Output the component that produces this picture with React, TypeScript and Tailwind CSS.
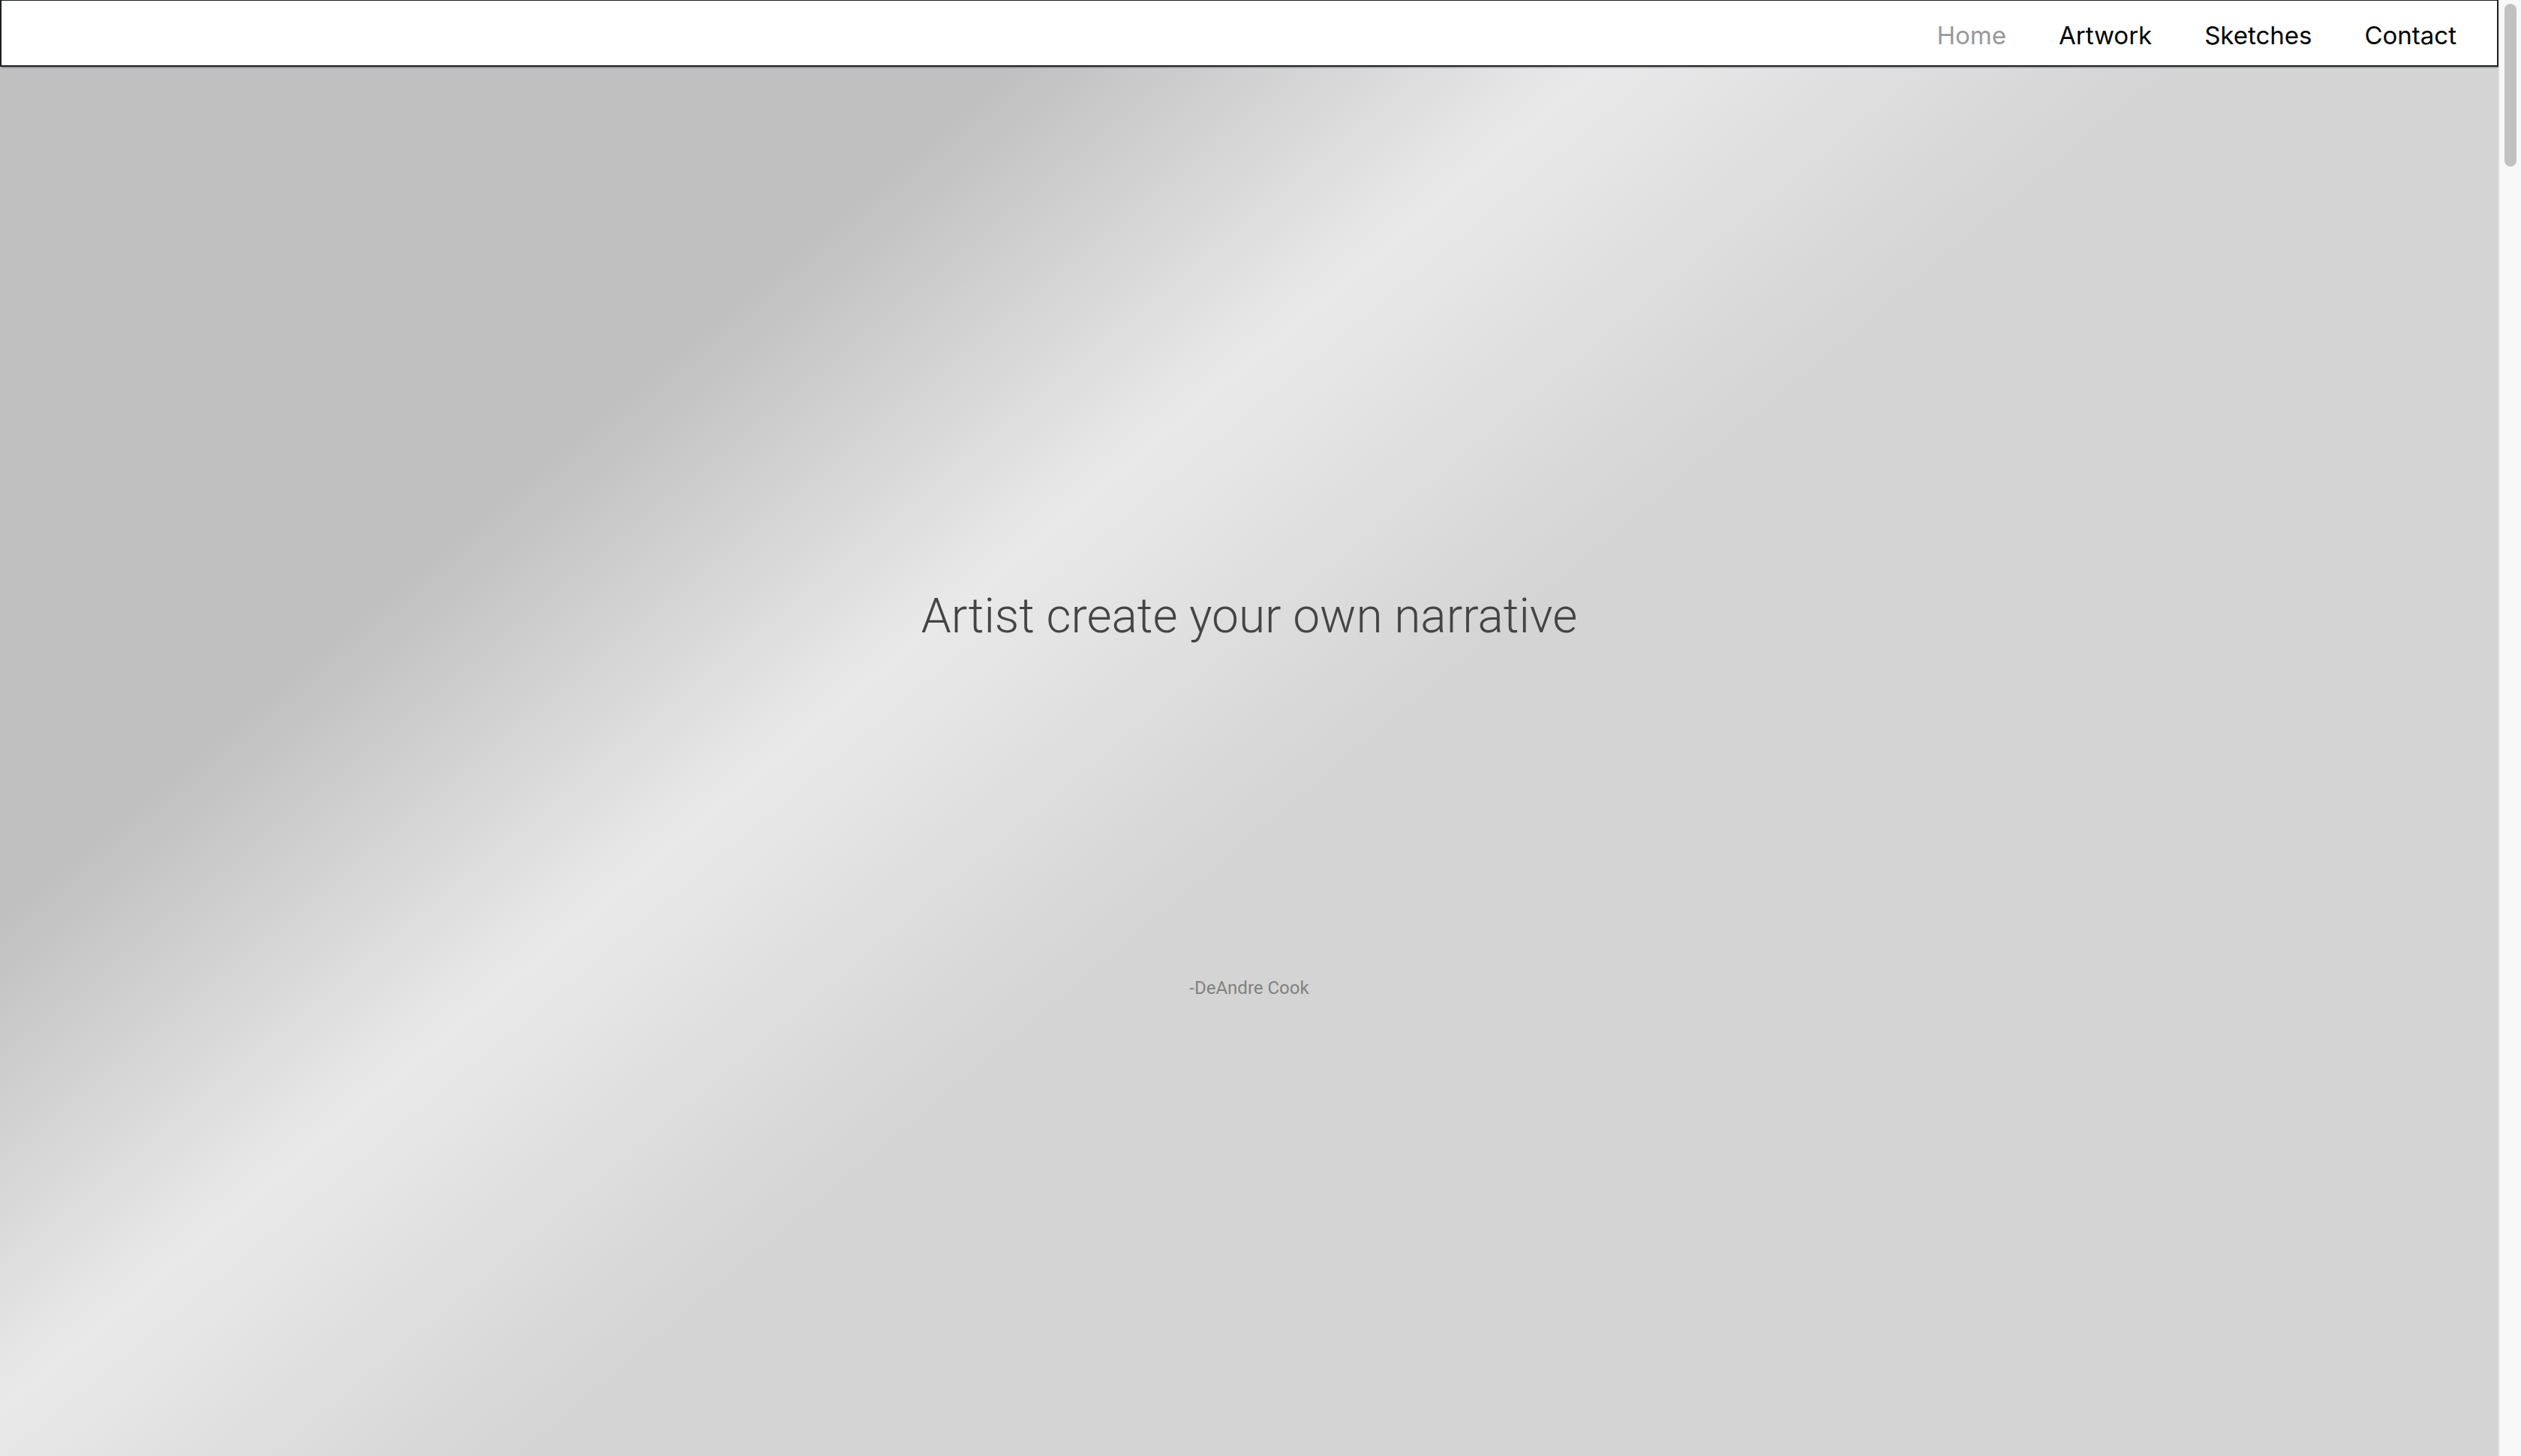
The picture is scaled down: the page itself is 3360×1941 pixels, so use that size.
// 홈 화면: 상단 네비 + 그라데이션 히어로
const navItems = [
  { label: 'Home', active: true },
  { label: 'Artwork', active: false },
  { label: 'Sketches', active: false },
  { label: 'Contact', active: false },
];

function Navbar() {
  return (
    <nav className="relative z-10 flex h-[89px] w-full items-center justify-end gap-[70px] border-2 border-t border-[#1b1e22] bg-white pr-[54px] shadow-[2px_2px_0_rgba(0,0,0,0.2)]">
      {navItems.map((item) => (
        <a
          key={item.label}
          href="#"
          className={
            'pt-[7px] text-[33px] leading-none font-normal ' +
            (item.active ? 'text-[#999999]' : 'text-black')
          }
          style={{ fontFamily: 'Inter, "Noto Sans", sans-serif' }}
        >
          {item.label}
        </a>
      ))}
    </nav>
  );
}

function Hero() {
  return (
    <section
      className="flex h-[1852px] flex-col items-center bg-[linear-gradient(140deg,#c0c0c0_24.5%,#e9e9e9_38.5%,#d4d4d4_52.5%)] pt-[701px]"
      style={{ fontFamily: 'Roboto, "Liberation Sans", sans-serif' }}
    >
      <h1 className="text-[64px] leading-none font-light text-[#444444]">
        Artist create your own narrative
      </h1>
      <p className="mt-[451px] text-[24px] leading-none font-normal text-[#808080]">-DeAndre Cook</p>
    </section>
  );
}

// 브라우저 스크롤바 모양 (세로 막대)
function ScrollBar() {
  return (
    <div className="w-[30px] shrink-0 border-l-2 border-[#ececec] bg-[#f8f8f8]">
      <div className="mt-[5px] ml-[6px] h-[217px] w-[16px] rounded-full bg-[#c1c1c1]" />
    </div>
  );
}

export default function App() {
  return (
    <div className="flex h-screen overflow-hidden bg-[#d4d4d4]">
      <div className="min-w-0 flex-1 overflow-hidden">
        <Navbar />
        <Hero />
      </div>
      <ScrollBar />
    </div>
  );
}
